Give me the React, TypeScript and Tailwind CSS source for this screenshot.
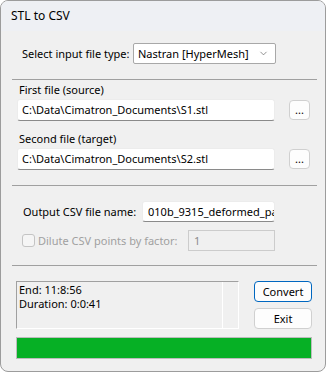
import { ChevronDown } from "lucide-react";

const font = { fontFamily: '"Noto Sans", "Open Sans", sans-serif' };

function Edit({ value, className }: { value: string; className: string }) {
  return (
    <div
      className={`flex items-center bg-white border border-[#ececec] border-b-[#8a8a8a] rounded-[3px] pl-[4px] overflow-hidden whitespace-nowrap text-[11px] text-black ${className}`}
    >
      {value}
    </div>
  );
}

function Browse() {
  return (
    <div className="w-[21px] h-[20px] flex items-end justify-center pb-[4px] bg-[#fdfdfd] border border-[#d0d0d0] rounded-[4px] text-[11px] leading-none text-black">
      ...
    </div>
  );
}

export default function App() {
  return (
    <div className="w-[329px] h-[375px] bg-white" style={font}>
      <div className="w-[326px] h-[372px] flex flex-col border border-[#9c9c9c] rounded-lg overflow-hidden bg-[#f0f0f0]">
        {/* title bar */}
        <div className="h-[30px] shrink-0 flex items-center pl-[10px] bg-[#eef0f4] text-[12px] text-black">
          STL to CSV
        </div>

        <div className="flex flex-col pl-[11px] pr-[8px] text-[11px] leading-[16px] text-black whitespace-nowrap">
          {/* file type */}
          <div className="flex items-center mt-[12px] h-[21px]">
            <span className="ml-[10px] w-[111px]">Select input file type:</span>
            <div className="w-[143px] h-[21px] flex items-center justify-between bg-white border border-[#a8a8a8] rounded-[2px] pl-[4px] pr-[6px]">
              <span>Nastran [HyperMesh]</span>
              <ChevronDown size={11} strokeWidth={1.5} className="text-[#606060]" />
            </div>
          </div>

          <div className="h-px bg-[#a0a0a0] mt-[15px]" />

          {/* source / target */}
          <div className="ml-[7px] mt-[1px] h-[17px] leading-[17px]">First file (source)</div>
          <div className="flex items-center mt-[1px]">
            <Edit value="C:\Data\Cimatron_Documents\S1.stl" className="ml-[5px] w-[258px] h-[22px]" />
            <div className="ml-[14px]">
              <Browse />
            </div>
          </div>
          <div className="ml-[7px] mt-[9px] h-[17px] leading-[17px]">Second file (target)</div>
          <div className="flex items-center mt-[1px]">
            <Edit value="C:\Data\Cimatron_Documents\S2.stl" className="ml-[5px] w-[258px] h-[22px]" />
            <div className="ml-[14px]">
              <Browse />
            </div>
          </div>

          <div className="h-px bg-[#a0a0a0] mt-[15px]" />

          {/* output */}
          <div className="flex items-center mt-[15px] h-[21px]">
            <span className="ml-[11px] w-[119px]">Output CSV file name:</span>
            <Edit value="010b_9315_deformed_part" className="w-[133px] h-[21px] pl-[5px]" />
          </div>
          <div className="flex items-center mt-[8px] h-[21px]">
            <div className="ml-[10px] w-[13px] h-[13px] border border-[#c4c4c4] rounded-[3px] bg-[#f5f5f5]" />
            <span className="ml-[3px] w-[150px] text-[#a0a0a0]">Dilute CSV points by factor:</span>
            <div className="w-[87px] h-[21px] flex items-center pl-[5px] border border-[#cccccc] bg-[#f0f0f0] text-[#8c8c8c]">
              1
            </div>
          </div>

          <div className="h-px bg-[#a0a0a0] mt-[14px]" />

          {/* log + buttons */}
          <div className="flex mt-[15px] h-[48px]">
            <div className="ml-[4px] w-[223px] h-[48px] flex border-t border-l border-[#a0a0a0] border-b-white border-r-white border-b border-r">
              <div className="w-[206px] border-r border-white pl-[2px] pt-[1px] leading-[14px]">
                <div>End: 11:8:56</div>
                <div>Duration: 0:0:41</div>
              </div>
            </div>
            <div className="ml-[15px] flex flex-col">
              <div className="w-[58px] h-[21px] flex items-center justify-center bg-[#fdfdfd] border border-[#0067c0] rounded-[4px]">
                Convert
              </div>
              <div className="w-[58px] h-[21px] mt-[6px] flex items-center justify-center bg-[#fdfdfd] border border-[#d0d0d0] rounded-[4px]">
                Exit
              </div>
            </div>
          </div>

          {/* progress */}
          <div className="ml-[4px] mt-[8px] w-[296px] h-[22px] bg-[#06b025] border border-[#bcbcbc]" />
        </div>
      </div>
    </div>
  );
}
